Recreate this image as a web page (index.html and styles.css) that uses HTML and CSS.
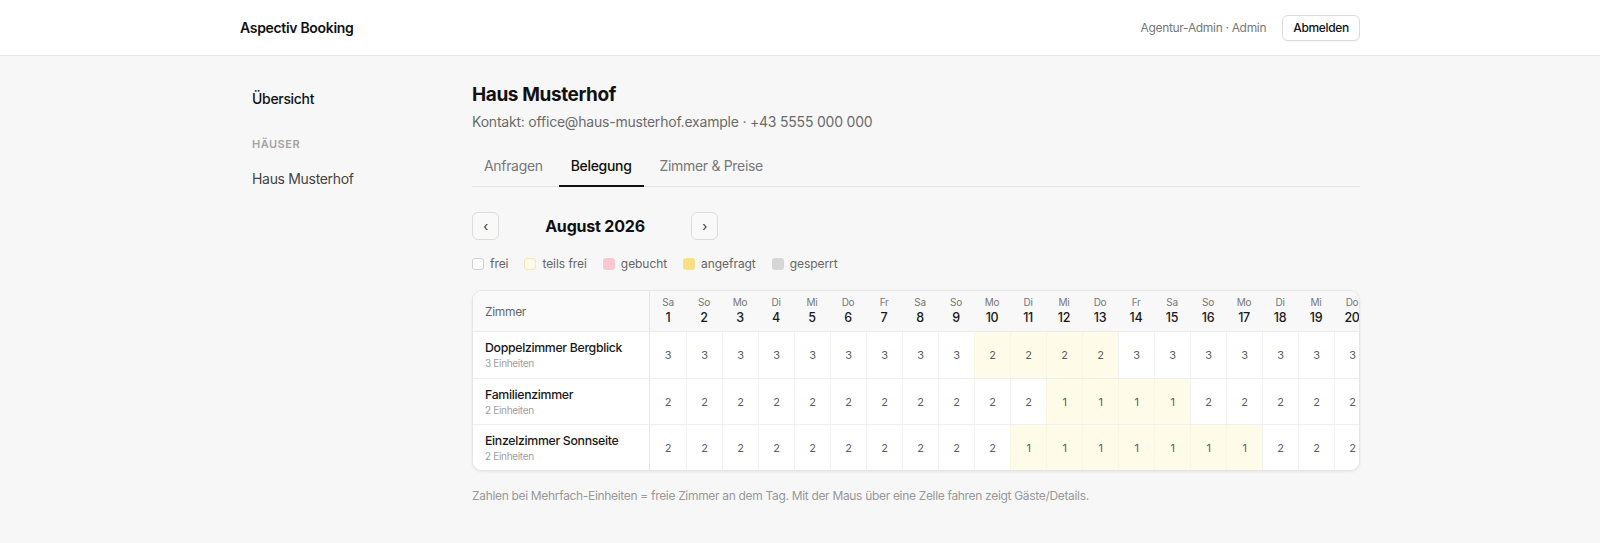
FILE: index.html
```html
<!DOCTYPE html>
<html lang="de">
<head>
<meta charset="utf-8">
<title>Aspectiv Booking</title>
<link rel="stylesheet" href="styles.css">
</head>
<body>
<header class="topbar">
  <div class="topbar-inner">
    <div class="brand">Aspectiv Booking</div>
    <div class="user">
      <span class="user-name">Agentur-Admin · Admin</span>
      <button class="btn-logout">Abmelden</button>
    </div>
  </div>
</header>
<div class="layout">
  <aside class="sidebar">
    <a class="nav-item nav-strong">Übersicht</a>
    <div class="nav-label">Häuser</div>
    <a class="nav-item nav-house">Haus Musterhof</a>
  </aside>
  <main class="main">
    <h1 class="title">Haus Musterhof</h1>
    <div class="contact">Kontakt: office@haus-musterhof.example · +43 5555 000 000</div>
    <nav class="tabs">
      <a class="tab">Anfragen</a>
      <a class="tab tab-active">Belegung</a>
      <a class="tab">Zimmer &amp; Preise</a>
    </nav>
    <div class="month-nav">
      <button class="nav-btn">‹</button>
      <div class="month-title">August 2026</div>
      <button class="nav-btn">›</button>
    </div>
    <div class="legend">
      <span class="legend-item"><i class="sw sw-free"></i>frei</span>
      <span class="legend-item"><i class="sw sw-part"></i>teils frei</span>
      <span class="legend-item"><i class="sw sw-booked"></i>gebucht</span>
      <span class="legend-item"><i class="sw sw-req"></i>angefragt</span>
      <span class="legend-item"><i class="sw sw-block"></i>gesperrt</span>
    </div>
    <div class="cal">
      <div class="cal-scroll">
        <div class="row head">
          <div class="room-h">Zimmer</div>
          <div class="dh"><span>Sa</span><b>1</b></div>
          <div class="dh"><span>So</span><b>2</b></div>
          <div class="dh"><span>Mo</span><b>3</b></div>
          <div class="dh"><span>Di</span><b>4</b></div>
          <div class="dh"><span>Mi</span><b>5</b></div>
          <div class="dh"><span>Do</span><b>6</b></div>
          <div class="dh"><span>Fr</span><b>7</b></div>
          <div class="dh"><span>Sa</span><b>8</b></div>
          <div class="dh"><span>So</span><b>9</b></div>
          <div class="dh"><span>Mo</span><b>10</b></div>
          <div class="dh"><span>Di</span><b>11</b></div>
          <div class="dh"><span>Mi</span><b>12</b></div>
          <div class="dh"><span>Do</span><b>13</b></div>
          <div class="dh"><span>Fr</span><b>14</b></div>
          <div class="dh"><span>Sa</span><b>15</b></div>
          <div class="dh"><span>So</span><b>16</b></div>
          <div class="dh"><span>Mo</span><b>17</b></div>
          <div class="dh"><span>Di</span><b>18</b></div>
          <div class="dh"><span>Mi</span><b>19</b></div>
          <div class="dh"><span>Do</span><b>20</b></div>
          <div class="dh"><span>Fr</span><b>21</b></div>
          <div class="dh"><span>Sa</span><b>22</b></div>
          <div class="dh"><span>So</span><b>23</b></div>
          <div class="dh"><span>Mo</span><b>24</b></div>
          <div class="dh"><span>Di</span><b>25</b></div>
          <div class="dh"><span>Mi</span><b>26</b></div>
          <div class="dh"><span>Do</span><b>27</b></div>
          <div class="dh"><span>Fr</span><b>28</b></div>
          <div class="dh"><span>Sa</span><b>29</b></div>
          <div class="dh"><span>So</span><b>30</b></div>
          <div class="dh"><span>Mo</span><b>31</b></div>
        </div>
        <div class="row">
          <div class="room"><div class="room-name">Doppelzimmer Bergblick</div><div class="room-sub">3 Einheiten</div></div>
          <div class="c">3</div><div class="c">3</div><div class="c">3</div><div class="c">3</div><div class="c">3</div><div class="c">3</div><div class="c">3</div><div class="c">3</div><div class="c">3</div>
          <div class="c p">2</div><div class="c p">2</div><div class="c p">2</div><div class="c p">2</div>
          <div class="c">3</div><div class="c">3</div><div class="c">3</div><div class="c">3</div><div class="c">3</div><div class="c">3</div><div class="c">3</div>
          <div class="c">3</div><div class="c">3</div><div class="c">3</div><div class="c">3</div><div class="c">3</div><div class="c">3</div><div class="c">3</div><div class="c">3</div><div class="c">3</div><div class="c">3</div><div class="c">3</div>
        </div>
        <div class="row">
          <div class="room"><div class="room-name">Familienzimmer</div><div class="room-sub">2 Einheiten</div></div>
          <div class="c">2</div><div class="c">2</div><div class="c">2</div><div class="c">2</div><div class="c">2</div><div class="c">2</div><div class="c">2</div><div class="c">2</div><div class="c">2</div><div class="c">2</div><div class="c">2</div>
          <div class="c p">1</div><div class="c p">1</div><div class="c p">1</div><div class="c p">1</div>
          <div class="c">2</div><div class="c">2</div><div class="c">2</div><div class="c">2</div><div class="c">2</div>
          <div class="c">2</div><div class="c">2</div><div class="c">2</div><div class="c">2</div><div class="c">2</div><div class="c">2</div><div class="c">2</div><div class="c">2</div><div class="c">2</div><div class="c">2</div><div class="c">2</div>
        </div>
        <div class="row">
          <div class="room"><div class="room-name">Einzelzimmer Sonnseite</div><div class="room-sub">2 Einheiten</div></div>
          <div class="c">2</div><div class="c">2</div><div class="c">2</div><div class="c">2</div><div class="c">2</div><div class="c">2</div><div class="c">2</div><div class="c">2</div><div class="c">2</div><div class="c">2</div>
          <div class="c p">1</div><div class="c p">1</div><div class="c p">1</div><div class="c p">1</div><div class="c p">1</div><div class="c p">1</div><div class="c p">1</div>
          <div class="c">2</div><div class="c">2</div><div class="c">2</div>
          <div class="c">2</div><div class="c">2</div><div class="c">2</div><div class="c">2</div><div class="c">2</div><div class="c">2</div><div class="c">2</div><div class="c">2</div><div class="c">2</div><div class="c">2</div><div class="c">2</div>
        </div>
      </div>
    </div>
    <p class="note">Zahlen bei Mehrfach-Einheiten = freie Zimmer an dem Tag. Mit der Maus über eine Zelle fahren zeigt Gäste/Details.</p>
  </main>
</div>
</body>
</html>
```
FILE: styles.css
```css
* { box-sizing: border-box; }
html, body { margin: 0; padding: 0; }
body {
  font-family: Inter, "Noto Sans", "Liberation Sans", sans-serif;
  letter-spacing: -0.02em;
  background: #f7f7f7;
  color: #111;
  height: 543px;
  overflow: hidden;
}
button { font-family: inherit; letter-spacing: inherit; }
.topbar {
  height: 56px;
  background: #fff;
  border-bottom: 1px solid #e8e8e8;
}
.topbar-inner {
  width: 1120px;
  margin: 0 auto;
  height: 55px;
  display: flex;
  align-items: center;
  justify-content: space-between;
}
.brand { font-size: 14px; font-weight: 600; color: #111; }
.user { display: flex; align-items: center; gap: 16px; }
.user-name { font-size: 12px; color: #777; }
.btn-logout {
  height: 26px;
  padding: 0 10px;
  font-size: 12px;
  font-weight: 500;
  color: #111;
  background: #fff;
  border: 1px solid #dcdcdc;
  border-radius: 6px;
  box-shadow: 0 1px 1px rgba(0,0,0,0.04);
}
.layout {
  width: 1120px;
  margin: 0 auto;
  display: flex;
}
.sidebar {
  width: 232px;
  flex: none;
  padding-top: 33px;
  display: flex;
  flex-direction: column;
}
.nav-item { display: block; padding: 0 12px; font-size: 14px; line-height: 20px; }
.nav-strong { color: #111; font-weight: 500; }
.nav-label {
  margin-top: 29px;
  padding: 0 12px;
  font-size: 11px;
  line-height: 12px;
  font-weight: 600;
  letter-spacing: 0.5px;
  text-transform: uppercase;
  color: #a3a3a3;
}
.nav-house { margin-top: 19px; color: #444; }
.main { flex: 1; min-width: 0; padding-top: 25px; }
.title { margin: 0; font-size: 19px; line-height: 28px; font-weight: 700; letter-spacing: -0.4px; color: #111; }
.contact { margin-top: 3px; font-size: 14px; line-height: 20px; color: #6b6b6b; letter-spacing: -0.015em; }
.tabs {
  margin-top: 16px;
  display: flex;
  gap: 4px;
  border-bottom: 1px solid #e4e4e4;
}
.tab {
  padding: 8px 12px 9px;
  font-size: 14px;
  line-height: 20px;
  color: #777;
  border-bottom: 2px solid transparent;
  margin-bottom: -1px;
}
.tab-active { color: #111; font-weight: 500; border-bottom-color: #111; }
.month-nav { margin-top: 25px; display: flex; align-items: center; }
.nav-btn {
  width: 27px;
  height: 28px;
  padding: 0;
  border: 1px solid #dcdcdc;
  border-radius: 6px;
  background: #f9f9f9;
  color: #333;
  font-size: 13px;
  line-height: 1;
}
.month-title { width: 192px; text-align: center; font-size: 16px; font-weight: 700; letter-spacing: -0.2px; color: #111; }
.legend { margin-top: 16px; display: flex; gap: 16px; font-size: 12px; line-height: 16px; color: #666; letter-spacing: -0.005em; }
.legend-item { display: flex; align-items: center; gap: 6px; }
.sw { width: 12px; height: 12px; border-radius: 3px; display: inline-block; }
.sw-free { background: #fff; border: 1px solid #cfcfcf; }
.sw-part { background: #fefbe4; border: 1px solid #f1e7b4; }
.sw-booked { background: #f8c8d3; }
.sw-req { background: #fbe083; }
.sw-block { background: #d6d6d6; }
.cal {
  margin-top: 18px;
  background: #fff;
  border: 1px solid #e6e6e6;
  border-radius: 10px;
  box-shadow: 0 1px 3px rgba(0,0,0,0.08);
  overflow: hidden;
}
.cal-scroll { overflow: hidden; }
.row {
  display: grid;
  grid-template-columns: 177px repeat(31, 36px);
  height: 46px;
  border-top: 1px solid #efefef;
}
.row.head { height: 41px; border-top: 0; background: #f8f8f8; border-bottom: 1px solid #ececec; }
.row.head + .row { border-top: 0; }
.room-h {
  display: flex;
  align-items: center;
  padding: 0 12px;
  font-size: 12px;
  color: #666;
  background: #fafafa;
  border-right: 1px solid #e6e6e6;
}
.dh {
  display: flex;
  flex-direction: column;
  align-items: center;
  justify-content: center;
  padding-bottom: 3px;
}
.dh span { font-size: 10px; line-height: 15px; color: #777; }
.dh b { font-size: 12.5px; line-height: 15px; font-weight: 500; color: #1a1a1a; }
.room {
  padding: 8px 12px 0;
  background: #fff;
  border-right: 1px solid #e6e6e6;
}
.room-name { font-size: 12.3px; line-height: 16px; font-weight: 500; color: #1a1a1a; }
.room-sub { font-size: 10px; line-height: 14px; color: #a0a0a0; }
.c {
  display: flex;
  align-items: center;
  justify-content: center;
  font-size: 11px;
  color: #606060;
  background: #fff;
  border-left: 1px solid #f2f2f2;
}
.row .room + .c { border-left: 0; }
.c.p { background: #fefce8; border-left-color: #f8f5e2; }
.note { margin: 17px 0 0; font-size: 12px; line-height: 16px; color: #999; }
```
